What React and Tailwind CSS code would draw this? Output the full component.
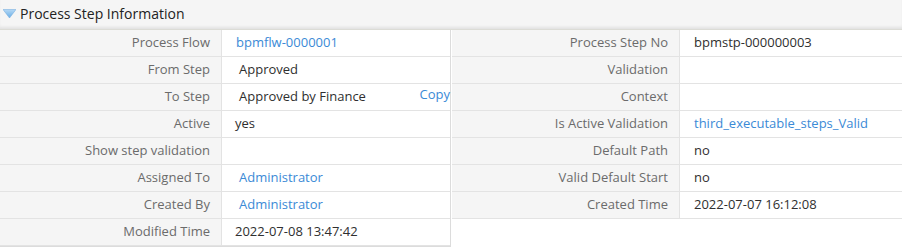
import React from "react";

const leftRows = [
  { label: "Process Flow", value: "bpmflw-0000001", link: true, pad: "pl-[14px]" },
  { label: "From Step", value: "Approved", pad: "pl-[17px]" },
  { label: "To Step", value: "Approved by Finance", pad: "pl-[17px]", copy: true },
  { label: "Active", value: "yes", pad: "pl-[13px]" },
  { label: "Show step validation", value: "", pad: "pl-[13px]" },
  { label: "Assigned To", value: "Administrator", link: true, pad: "pl-[17px]" },
  { label: "Created By", value: "Administrator", link: true, pad: "pl-[17px]" },
  { label: "Modified Time", value: "2022-07-08 13:47:42", pad: "pl-[13px]" },
];

const rightRows = [
  { label: "Process Step No", value: "bpmstp-000000003" },
  { label: "Validation", value: "" },
  { label: "Context", value: "" },
  { label: "Is Active Validation", value: "third_executable_steps_Valid", link: true },
  { label: "Default Path", value: "no" },
  { label: "Valid Default Start", value: "no" },
  { label: "Created Time", value: "2022-07-07 16:12:08" },
];

function Row({ row, labelWidth, pad = "pl-[14px]" }) {
  return (
    <div
      className="grid h-[27px] border-b border-[#e3e3e3] text-[13px]"
      style={{ gridTemplateColumns: `${labelWidth}px 1fr` }}
    >
      <div className="flex items-center justify-end bg-[#f5f5f5] border-r border-[#e3e3e3] pr-[11px] text-[#6b6b6b]">
        {row.label}
      </div>
      <div className={`relative flex items-center ${pad} bg-white`}>
        <span className={row.link ? "text-[#3b8ad6]" : "text-[#2f2f2f]"}>
          {row.value}
        </span>
        {row.copy && (
          <span className="absolute right-0 top-[1px] text-[#3b8ad6]">Copy</span>
        )}
      </div>
    </div>
  );
}

export default function App() {
  return (
    <div
      className="w-[902px] h-[247px] bg-white overflow-hidden"
      style={{ fontFamily: '"Open Sans", "Liberation Sans", sans-serif' }}
    >
      <div className="h-[30px] bg-[#f5f5f5] border-b border-[#dcdcd6] shadow-[inset_0_-3px_3px_-1px_rgba(0,0,0,0.08)] flex items-center pl-[3px] gap-[4px]">
        <svg width="13" height="9" viewBox="0 0 13 9" className="mb-[2px]">
          <defs>
            <linearGradient id="tri" x1="0" y1="0" x2="0" y2="1">
              <stop offset="0" stopColor="#b4d8f5" />
              <stop offset="1" stopColor="#6aaee6" />
            </linearGradient>
          </defs>
          <path d="M0 0.5 H13 L6.5 9 Z" fill="url(#tri)" stroke="#6fa9dc" strokeWidth="0.5" />
        </svg>
        <span className="text-[14px] text-[#222] mb-[2px]">Process Step Information</span>
      </div>
      <div className="flex">
        <div className="w-[451px] border-r border-b border-[#dcdcdc]">
          {leftRows.map((r) => (
            <Row key={r.label} row={r} labelWidth={222} pad={r.pad} />
          ))}
        </div>
        <div className="flex-1 pl-[1px]">
          {rightRows.map((r) => (
            <Row key={r.label} row={r} labelWidth={228} pad="pl-[14px]" />
          ))}
        </div>
      </div>
    </div>
  );
}
